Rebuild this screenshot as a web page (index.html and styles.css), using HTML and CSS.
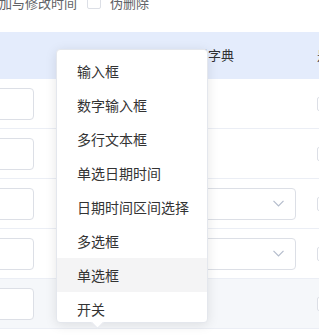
FILE: index.html
```html
<!DOCTYPE html>
<html lang="zh-CN">
<head>
  <meta charset="UTF-8">
  <meta name="viewport" content="width=device-width, initial-scale=1.0">
  <title>字段配置</title>
  <link rel="stylesheet" href="styles.css">
</head>
<body>

  <div class="page">
    <div class="toolbar">
      <span class="label">添加与修改时间</span>
      <span class="check"></span>
      <span class="label">伪删除</span>
    </div>

    <div class="field-table">
      <div class="row head">
        <div class="cell c1"></div>
        <div class="cell c2 title">类型</div>
        <div class="cell c3">关联字典</div>
        <div class="cell c4">是否必填</div>
      </div>

      <div class="row">
        <div class="cell c1"><span class="input"></span></div>
        <div class="cell c2"><span class="input"></span></div>
        <div class="cell c3"></div>
        <div class="cell c4"><span class="check"></span></div>
      </div>
      <div class="row">
        <div class="cell c1"><span class="input"></span></div>
        <div class="cell c2"><span class="input"></span></div>
        <div class="cell c3"></div>
        <div class="cell c4"><span class="check"></span></div>
      </div>
      <div class="row">
        <div class="cell c1"><span class="input"></span></div>
        <div class="cell c2"><span class="input"></span></div>
        <div class="cell c3">
          <span class="input select">
            <svg width="11" height="7" viewBox="0 0 11 7"><polyline points="0.5,0.8 5.5,5.8 10.5,0.8" fill="none" stroke="#b4bccc" stroke-width="1.2"/></svg>
          </span>
        </div>
        <div class="cell c4"><span class="check"></span></div>
      </div>
      <div class="row">
        <div class="cell c1"><span class="input"></span></div>
        <div class="cell c2"><span class="input"></span></div>
        <div class="cell c3">
          <span class="input select">
            <svg width="11" height="7" viewBox="0 0 11 7"><polyline points="0.5,0.8 5.5,5.8 10.5,0.8" fill="none" stroke="#b4bccc" stroke-width="1.2"/></svg>
          </span>
        </div>
        <div class="cell c4"><span class="check"></span></div>
      </div>
      <div class="row hover">
        <div class="cell c1"><span class="input"></span></div>
        <div class="cell c2"><span class="input"></span></div>
        <div class="cell c3"></div>
        <div class="cell c4"><span class="check"></span></div>
      </div>
    </div>

    <!-- type dropdown, opened above its select -->
    <div class="dropdown">
      <ul class="options">
        <li>输入框</li>
        <li>数字输入框</li>
        <li>多行文本框</li>
        <li>单选日期时间</li>
        <li>日期时间区间选择</li>
        <li>多选框</li>
        <li class="active">单选框</li>
        <li>开关</li>
      </ul>
      <span class="arrow"></span>
    </div>
  </div>

</body>
</html>
```

FILE: styles.css
```css
body {
  margin: 0;
  padding: 0;
  font-family: "Noto Sans CJK SC", "Noto Sans", sans-serif;
  background: #ffffff;
  overflow: hidden;
}

.page {
  position: relative;
  width: 319px;
  height: 335px;
  overflow: hidden;
}

.toolbar {
  height: 20px;
  margin-top: -8px;
  margin-left: -14px;
  display: flex;
  align-items: center;
  font-size: 13px;
  color: #606266;
}

.toolbar .check {
  margin: 0 9px 0 10px;
}

.check {
  display: inline-block;
  width: 14px;
  height: 14px;
  box-sizing: border-box;
  border: 1px solid #dcdfe6;
  border-radius: 2px;
  background: #fff;
  flex-shrink: 0;
}

.field-table {
  margin-top: 20px;
  margin-left: -60px;
}

.row {
  display: grid;
  grid-template-columns: 104px 128px 134px 100px;
  height: 50px;
  box-sizing: border-box;
  border-bottom: 1px solid #ebeef5;
}

.row.head {
  height: 47px;
  border-bottom: none;
  background: #e4ecfc;
  font-size: 13px;
  color: #303133;
}

.row.head .cell {
  padding-bottom: 2px;
}

.row.hover {
  background: #f5f7fa;
}

.cell {
  display: flex;
  align-items: center;
  padding: 0 10px;
  white-space: nowrap;
}

.cell.c2 {
  padding-left: 18px;
}

.cell.title {
  padding-left: 22px;
}

.cell.c4 {
  padding-left: 11px;
}

.input {
  display: flex;
  align-items: center;
  justify-content: flex-end;
  width: 100%;
  height: 32px;
  box-sizing: border-box;
  border: 1px solid #dcdfe6;
  border-radius: 4px;
  background: #fff;
}

.select {
  padding-right: 11px;
}

.dropdown {
  position: absolute;
  left: 56px;
  top: 49px;
  width: 152px;
  height: 274px;
  box-sizing: border-box;
  border: 1px solid #e4e7ed;
  border-radius: 4px;
  background: #fff;
  box-shadow: 0 2px 12px 0 rgba(0, 0, 0, 0.1);
}

.options {
  list-style: none;
  margin: 0;
  padding: 4px 0 0;
  height: 100%;
  box-sizing: border-box;
  overflow: hidden;
}

.options li {
  height: 34px;
  line-height: 34px;
  padding: 0 20px;
  font-size: 14px;
  color: #333;
  white-space: nowrap;
}

.options li.active {
  background: #f4f4f5;
}

.arrow {
  position: absolute;
  left: 36px;
  bottom: -5px;
  width: 8px;
  height: 8px;
  background: #fff;
  border-right: 1px solid #e4e7ed;
  border-bottom: 1px solid #e4e7ed;
  transform: rotate(45deg);
}
```
